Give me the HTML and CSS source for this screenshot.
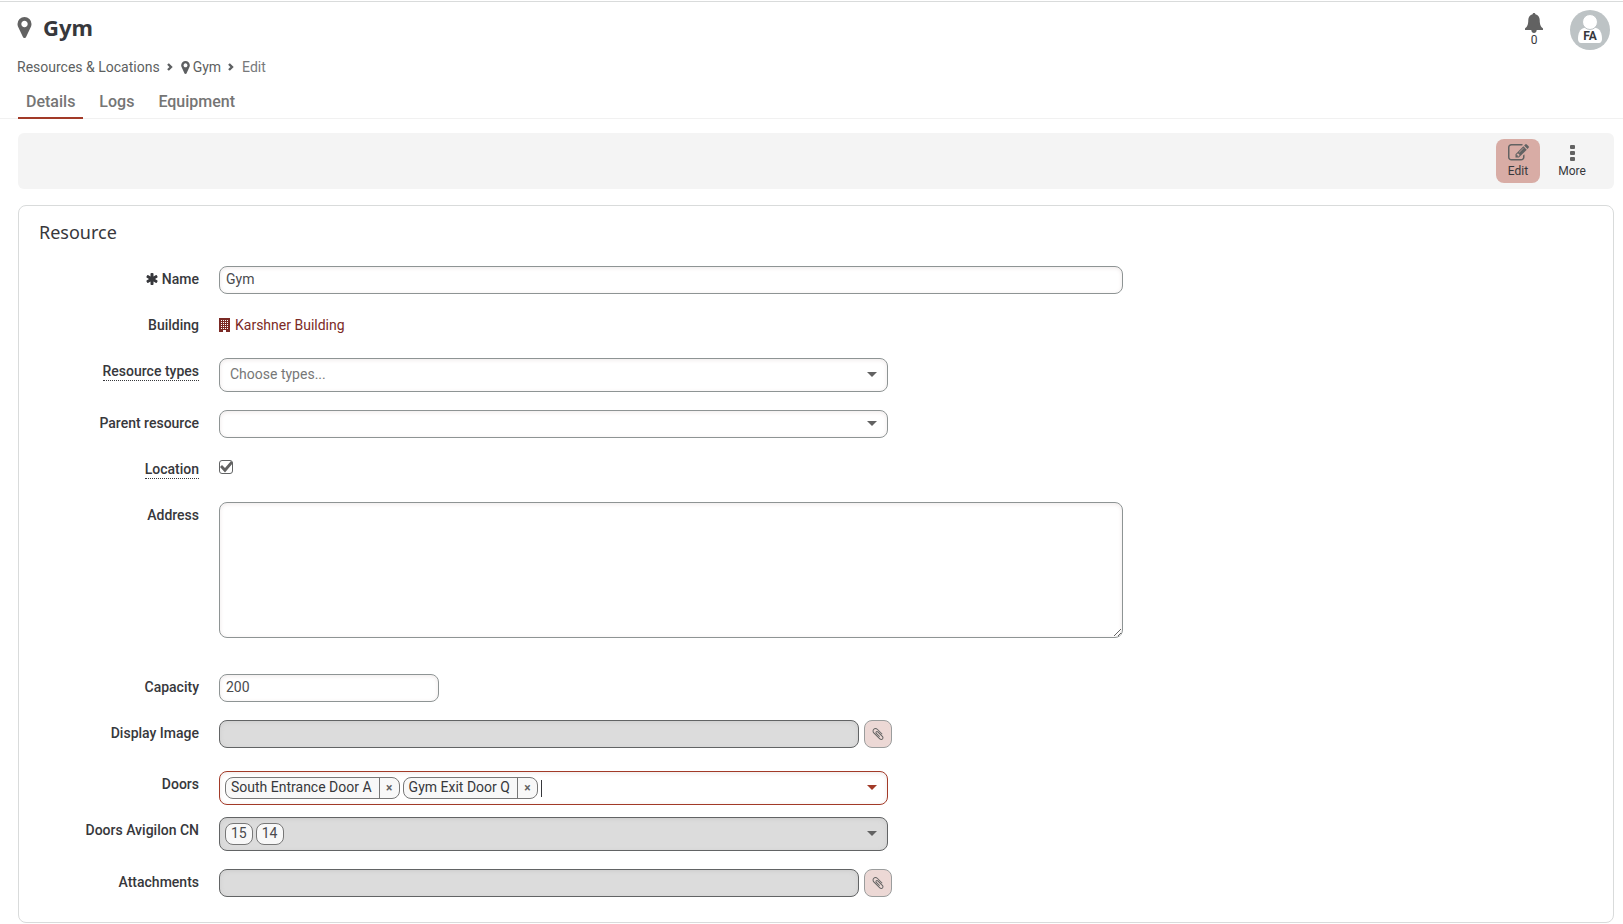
FILE: index.html
```html
<!DOCTYPE html>
<html lang="en">
<head>
    <meta charset="UTF-8">
    <meta name="viewport" content="width=device-width, initial-scale=1.0">
    <title>Gym - Edit</title>
    <link rel="stylesheet" href="styles.css">
</head>
<body>
    <svg class="sprite" aria-hidden="true">
        <symbol id="marker" viewBox="384 128 1024 1536"><path d="M1130 640q0-97-68.500-165.500t-165.500-68.500-165.500 68.500-68.500 165.500 68.500 165.500 165.500 68.500 165.500-68.500 68.500-165.500zm278 0q0 109-33 179l-364 774q-16 33-47.500 52t-67.500 19-67.500-19-46.500-52l-365-774q-33-70-33-179 0-212 150-362t362-150 362 150 150 362z"/></symbol>
        <symbol id="chevron" viewBox="0 0 7 8"><path d="M1 1l3 3-3 3" fill="none" stroke="currentColor" stroke-width="2.400"/></symbol>
        <symbol id="paperclip" viewBox="0 0 1792 1792"><path d="M1596 1385q0 117-79 196t-196 79q-135 0-235-100l-777-776q-113-115-113-271 0-159 110-270t269-111q158 0 273 113l605 606q10 10 10 22 0 16-30.5 46.5t-46.5 30.5q-13 0-23-10l-606-607q-79-77-181-77-106 0-179 75t-73 181q0 105 76 181l776 777q63 63 145 63 64 0 106-42t42-106q0-82-63-145l-581-581q-26-24-60-24-29 0-48 19t-19 48q0 32 25 59l410 410q10 10 10 22 0 16-31 47t-47 31q-12 0-22-10l-410-410q-63-61-63-149 0-82 57-139t139-57q88 0 149 63l581 581q100 98 100 235z"/></symbol>
    </svg>

    <header class="header">
        <div class="heading">
            <h1 class="title"><svg class="title-icon"><use href="#marker"/></svg>Gym</h1>
            <nav class="breadcrumb" aria-label="Breadcrumb">
                <a href="#">Resources &amp; Locations</a>
                <svg class="chevron"><use href="#chevron"/></svg>
                <a href="#"><svg class="crumb-icon"><use href="#marker"/></svg>Gym</a>
                <svg class="chevron"><use href="#chevron"/></svg>
                <span class="current">Edit</span>
            </nav>
        </div>
        <div class="user-tools">
            <button type="button" class="bell" aria-label="Notifications">
                <svg class="bell-icon" viewBox="0 0 18 20"><path d="M9 0c.8 0 1.300.5 1.400 1.200 2.600.6 4.300 2.800 4.300 5.600 0 5.200 1.300 7.200 3.300 8.700v1.500H0v-1.500c2-1.500 3.300-3.500 3.300-8.700 0-2.800 1.700-5 4.300-5.600C7.700.5 8.200 0 9 0zM6.300 17h5.400C11.600 19 10.500 20 9 20s-2.600-1-2.700-3z"/></svg>
                <span>0</span>
            </button>
            <button type="button" class="avatar" aria-label="User menu">
                <svg class="avatar-icon" viewBox="0 0 40 40"><path d="M14 18c-4 1-6 5-6 11 0 2 1 4 3 4h18c2 0 3-2 3-4 0-6-2-10-6-11z" fill="#fff"/><circle cx="20" cy="12" r="7.500" fill="#fff" stroke="#bdc3c5"/></svg>
                <span class="initials">FA</span>
            </button>
        </div>
    </header>

    <nav class="tabs" aria-label="Sections">
        <a href="#" class="tab active">Details</a>
        <a href="#" class="tab">Logs</a>
        <a href="#" class="tab">Equipment</a>
    </nav>

    <main class="content">
        <div class="toolbar">
            <button type="button" class="tool selected">
                <svg class="tool-icon" viewBox="0 128 1792 1536"><path d="M888 1184l116-116-152-152-116 116v56h96v96h56zm440-720q-16-16-33 1l-350 350q-17 17-1 33t33-1l350-350q17-17 1-33zm80 594v190q0 119-84.5 203.5t-203.5 84.5h-832q-119 0-203.5-84.5t-84.5-203.5v-832q0-119 84.5-203.5t203.5-84.5h832q63 0 117 25 15 7 18 23 3 17-9 29l-49 49q-14 14-32 8-23-6-45-6h-832q-66 0-113 47t-47 113v832q0 66 47 113t113 47h832q66 0 113-47t47-113v-126q0-13 9-22l64-64q15-15 35-7t20 29zm-96-738l288 288-672 672h-288v-288zm444 132l-92 92-288-288 92-92q28-28 68-28t68 28l152 152q28 28 28 68t-28 68z"/></svg>
                Edit
            </button>
            <button type="button" class="tool">
                <svg class="tool-icon" viewBox="0 0 21 18"><rect x="8" y="1" width="5" height="4" rx="1"/><rect x="8" y="7" width="5" height="4" rx="1"/><rect x="8" y="13" width="5" height="4" rx="1"/></svg>
                More
            </button>
        </div>

        <form class="card">
            <h2 class="card-title">Resource</h2>

            <div class="row">
                <label class="label" for="name"><svg class="required" viewBox="128 128 1536 1536"><path d="M1546 1050q46 26 59.5 77.5t-12.5 97.500l-64 110q-26 46-77.500 59.500t-97.500-12.500l-266-153v307q0 52-38 90t-90 38h-128q-52 0-90-38t-38-90v-307l-266 153q-46 26-97.500 12.500t-77.500-59.500l-64-110q-26-46-12.500-97.500t59.500-77.500l266-154-266-154q-46-26-59.500-77.500t12.500-97.500l64-110q26-46 77.500-59.500t97.500 12.500l266 153v-307q0-52 38-90t90-38h128q52 0 90 38t38 90v307l266-153q46-26 97.500-12.500t77.500 59.500l64 110q26 46 12.500 97.500t-59.500 77.500l-266 154z"/></svg>Name</label>
                <input type="text" id="name" class="field wide" value="Gym">
            </div>

            <div class="row">
                <span class="label">Building</span>
                <a href="#" class="building">
                    <svg class="building-icon" viewBox="0 0 11 14"><path d="M0 0h11v14H7v-2H4v2H0z"/><path d="M2 2.500h7M2 4.500h7M2 6.500h7M2 8.500h7M2 10.500h7" stroke="#fff" stroke-dasharray="1 1"/></svg>
                    Karshner Building
                </a>
            </div>

            <div class="row">
                <label class="label" for="types"><span class="hint">Resource types</span></label>
                <div class="dropdown">
                    <select id="types" class="field tall placeholder">
                        <option>Choose types...</option>
                    </select>
                </div>
            </div>

            <div class="row">
                <label class="label" for="parent">Parent resource</label>
                <div class="dropdown">
                    <select id="parent" class="field">
                        <option></option>
                    </select>
                </div>
            </div>

            <div class="row">
                <label class="label" for="location"><span class="hint">Location</span></label>
                <div class="check">
                    <input type="checkbox" id="location" class="checkbox" checked>
                    <svg class="tick" viewBox="0 0 14 14"><path d="M1 7l2-2 3 3 6-7 2 2-8 9.500z"/></svg>
                </div>
            </div>

            <div class="row address">
                <label class="label" for="address">Address</label>
                <textarea id="address" class="field wide"></textarea>
            </div>

            <div class="row">
                <label class="label" for="capacity">Capacity</label>
                <input type="text" id="capacity" class="field short" value="200">
            </div>

            <div class="row image">
                <label class="label" for="image">Display Image</label>
                <div class="file">
                    <input type="text" id="image" class="field" disabled>
                    <button type="button" class="attach" aria-label="Choose image"><svg class="clip"><use href="#paperclip"/></svg></button>
                </div>
            </div>

            <div class="row doors">
                <label class="label" for="doors">Doors</label>
                <div class="dropdown multi focused">
                    <span class="chip">South Entrance Door A<button type="button" class="remove" aria-label="Remove South Entrance Door A">×</button></span>
                    <span class="chip">Gym Exit Door Q<button type="button" class="remove" aria-label="Remove Gym Exit Door Q">×</button></span>
                    <input type="text" id="doors" class="search">
                </div>
            </div>

            <div class="row">
                <span class="label">Doors Avigilon CN</span>
                <div class="dropdown multi disabled">
                    <span class="chip">15</span>
                    <span class="chip">14</span>
                </div>
            </div>

            <div class="row">
                <label class="label" for="attachments">Attachments</label>
                <div class="file">
                    <input type="text" id="attachments" class="field" disabled>
                    <button type="button" class="attach" aria-label="Add attachment"><svg class="clip"><use href="#paperclip"/></svg></button>
                </div>
            </div>
        </form>
    </main>
</body>
</html>
```
FILE: styles.css
```css
* {
    box-sizing: border-box;
}
body {
    margin: 0;
    padding-top: 1px;
    background: #fff;
    color: #37383c;
    font: 14px/20px Roboto, sans-serif;
}
a {
    color: inherit;
    text-decoration: none;
}
button {
    border: 0;
    padding: 0;
    background: none;
    color: inherit;
    font: inherit;
    cursor: pointer;
}
svg {
    display: block;
    fill: currentColor;
}
.sprite {
    display: none;
}

/* header */
.header {
    display: flex;
    justify-content: space-between;
    border-top: 1px solid #d9dbdb;
    padding: 8px 13px 0 17px;
}
.title {
    display: flex;
    align-items: center;
    gap: 11px;
    margin: 0 0 13px;
    font: bold 22px/34px "Noto Sans", sans-serif;
}
.title-icon {
    width: 15px;
    height: 21px;
    color: #626262;
}
.breadcrumb {
    display: flex;
    align-items: center;
    gap: 7px;
    color: #5d5f61;
}
.breadcrumb a {
    display: flex;
    align-items: center;
    gap: 3px;
}
.crumb-icon {
    width: 9px;
    height: 13px;
}
.chevron {
    width: 7px;
    height: 8px;
}
.current {
    color: #77797b;
}
.user-tools {
    display: flex;
    align-items: flex-start;
    gap: 22px;
}
.bell {
    display: flex;
    flex-direction: column;
    align-items: center;
    width: 28px;
    padding-top: 3px;
    font-size: 12px;
    line-height: 14px;
}
.bell-icon {
    width: 18px;
    height: 20px;
    color: #626262;
}
.avatar {
    display: grid;
    width: 40px;
    height: 40px;
    border-radius: 50%;
    background: #bdc3c5;
}
.avatar-icon,
.initials {
    grid-area: 1 / 1;
}
.initials {
    padding-top: 18px;
    font-size: 12px;
    line-height: 16px;
    font-weight: bold;
}

/* tabs */
.tabs {
    display: flex;
    gap: 8px;
    margin-top: 11px;
    padding-left: 18px;
    box-shadow: inset 0 -1px #f1f1f1;
}
.tab {
    padding: 4px 8px 5px;
    border-bottom: 2px solid transparent;
    color: #757575;
    font-size: 16px;
    line-height: 20px;
    font-weight: 500;
}
.tab.active {
    border-color: #a23a28;
}

/* toolbar */
.content {
    padding: 14px 9px 1px 18px;
}
.toolbar {
    display: flex;
    justify-content: flex-end;
    gap: 10px;
    padding: 6px 20px;
    border-radius: 6px;
    background: #f4f4f4;
}
.tool {
    display: flex;
    flex-direction: column;
    align-items: center;
    gap: 2px;
    width: 44px;
    height: 44px;
    padding-top: 5px;
    border-radius: 8px;
    font-size: 12px;
    line-height: 14px;
}
.tool.selected {
    background: #d8aca5;
}
.tool-icon {
    width: 21px;
    height: 18px;
    color: #626262;
}

/* form */
.card {
    margin-top: 16px;
    padding: 14px 20px 25px;
    border: 1px solid #d9dbdb;
    border-radius: 8px;
}
.card-title {
    margin: 0 0 22px;
    font: 18px/24px "Noto Sans", sans-serif;
}
.row {
    display: grid;
    grid-template-columns: 160px minmax(0, 1fr);
    align-items: start;
    gap: 20px;
    min-height: 28px;
    margin-bottom: 18px;
}
.row:last-child {
    margin-bottom: 0;
}
.row.address {
    margin-bottom: 36px;
}
.row.image {
    margin-bottom: 23px;
}
.row.doors {
    margin-bottom: 12px;
}
.label {
    display: flex;
    align-items: center;
    justify-content: flex-end;
    gap: 4px;
    line-height: 26px;
    font-weight: 500;
}
.required {
    width: 12px;
    height: 12px;
}
.hint {
    margin-top: 4px;
    border-bottom: 1px dotted #37383c;
    line-height: 18px;
}
.field {
    display: block;
    width: 100%;
    height: 28px;
    margin: 0;
    padding: 0 6px 2px;
    border: 1px solid #8e9494;
    border-radius: 8px;
    background: #fff;
    box-shadow: inset 0 1px 4px #eee8e8;
    color: #4a4b4e;
    font: inherit;
    appearance: none;
}
.field:disabled {
    border-color: #626465;
    background: #dcdcdc;
    box-shadow: inset 0 1px 4px #ccc;
}
.wide {
    max-width: 904px;
}
.short {
    max-width: 220px;
}
.tall {
    height: 34px;
}
.placeholder {
    padding-left: 10px;
    color: #777;
}
textarea.field {
    height: 136px;
    resize: vertical;
}
.building {
    display: flex;
    align-items: center;
    gap: 5px;
    color: #7b2a25;
    line-height: 26px;
}
.building-icon {
    width: 11px;
    height: 14px;
}
.dropdown {
    position: relative;
    max-width: 669px;
    color: #626262;
}
.dropdown::after {
    content: "";
    position: absolute;
    top: calc(50% - 3px);
    right: 11px;
    border: 5px solid transparent;
    border-top-color: currentColor;
    border-bottom: 0;
    pointer-events: none;
}
.check {
    display: grid;
    width: 14px;
    padding-top: 4px;
}
.checkbox,
.tick {
    grid-area: 1 / 1;
    width: 14px;
    height: 14px;
}
.checkbox {
    margin: 0;
    border: 1px solid #626465;
    border-radius: 3px;
    background: #fff;
    appearance: none;
}
.tick {
    color: #626262;
    pointer-events: none;
}
.checkbox:not(:checked) + .tick {
    display: none;
}
.file {
    display: flex;
    gap: 5px;
    max-width: 673px;
}
.attach {
    display: grid;
    place-items: center;
    flex: none;
    width: 28px;
    height: 28px;
    border: 1px solid #9b9d9d;
    border-radius: 8px;
    background: #ecd8d5;
    color: #626262;
}
.clip {
    width: 14px;
    height: 14px;
}

/* multiple choice */
.multi {
    display: flex;
    align-items: center;
    gap: 3px;
    height: 34px;
    padding: 0 32px 0 5px;
    border: 1px solid #626465;
    border-radius: 8px;
    box-shadow: inset 0 1px 4px #eee8e8;
}
.multi::after {
    right: 10px;
}
.multi.focused {
    border-color: #a23a28;
    color: #a23a28;
}
.multi.disabled {
    background: #dcdcdc;
    box-shadow: inset 0 1px 4px #ccc;
}
.chip {
    display: flex;
    height: 22px;
    padding: 0 5px;
    border: 1px solid #777;
    border-radius: 8px;
    background: #f8f8f8;
    color: #37383c;
    line-height: 18px;
    white-space: nowrap;
}
.focused .chip {
    padding-right: 0;
}
.remove {
    width: 20px;
    margin-left: 7px;
    border-left: 1px solid #777;
    color: #626262;
    font-size: 12px;
    line-height: 20px;
    font-weight: bold;
}
.search {
    flex: 1;
    min-width: 0;
    height: 17px;
    border: 0;
    border-left: 1px solid #37383c;
    outline: 0;
    padding: 0;
    background: none;
    font: inherit;
}
.disabled .chip {
    color: #4a4b4e;
}
```
